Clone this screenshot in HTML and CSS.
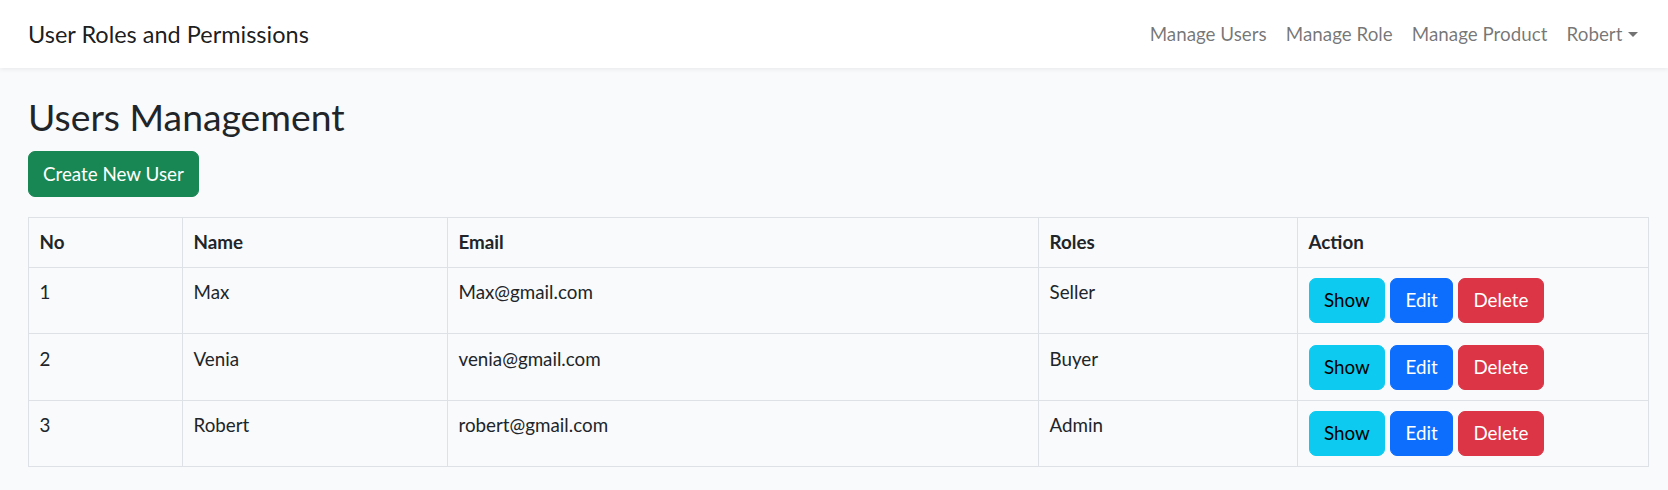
FILE: index.html
```html
<!DOCTYPE html>
<html lang="en">
<head>
<meta charset="utf-8">
<title>User Roles and Permissions</title>
<link rel="stylesheet" href="styles.css">
</head>
<body>
<nav class="navbar">
  <a class="brand" href="#">User Roles and Permissions</a>
  <ul class="nav">
    <li><a class="nav-link" href="#">Manage Users</a></li>
    <li><a class="nav-link" href="#">Manage Role</a></li>
    <li><a class="nav-link" href="#">Manage Product</a></li>
    <li><a class="nav-link dropdown-toggle" href="#">Robert</a></li>
  </ul>
</nav>
<main class="main">
  <h2 class="title">Users Management</h2>
  <a class="btn btn-success" href="#">Create New User</a>
  <table class="table">
    <colgroup>
      <col class="c-no"><col class="c-name"><col class="c-email"><col class="c-roles"><col class="c-action">
    </colgroup>
    <thead>
      <tr><th>No</th><th>Name</th><th>Email</th><th>Roles</th><th>Action</th></tr>
    </thead>
    <tbody>
      <tr>
        <td>1</td><td>Max</td><td>Max@gmail.com</td><td>Seller</td>
        <td><div class="actions"><a class="btn btn-info" href="#">Show</a><a class="btn btn-primary" href="#">Edit</a><a class="btn btn-danger" href="#">Delete</a></div></td>
      </tr>
      <tr>
        <td>2</td><td>Venia</td><td>venia@gmail.com</td><td>Buyer</td>
        <td><div class="actions"><a class="btn btn-info" href="#">Show</a><a class="btn btn-primary" href="#">Edit</a><a class="btn btn-danger" href="#">Delete</a></div></td>
      </tr>
      <tr>
        <td>3</td><td>Robert</td><td>robert@gmail.com</td><td>Admin</td>
        <td><div class="actions"><a class="btn btn-info" href="#">Show</a><a class="btn btn-primary" href="#">Edit</a><a class="btn btn-danger" href="#">Delete</a></div></td>
      </tr>
    </tbody>
  </table>
</main>
</body>
</html>
```

FILE: styles.css
```css
* { box-sizing: border-box; }
html, body { margin: 0; }
body {
  background: #f8fafc;
  color: #212529;
  font-family: "Lato", "Noto Sans", sans-serif;
  font-size: 18.8px;
  line-height: 28.8px;
}
a { text-decoration: none; }

.navbar {
  height: 68px;
  background: #fff;
  box-shadow: 0 2.4px 4.8px rgba(0,0,0,.075);
  display: flex;
  align-items: center;
  justify-content: space-between;
  padding: 0 20px 0 28px;
}
.brand {
  font-size: 23.5px;
  line-height: 36px;
  color: rgba(0,0,0,.9);
}
.nav {
  list-style: none;
  margin: 0;
  padding: 0;
  display: flex;
  align-items: center;
}
.nav-link {
  display: block;
  padding: 10px 9.6px;
  line-height: 28.8px;
  color: rgba(0,0,0,.55);
}
.dropdown-toggle::after {
  content: "";
  display: inline-block;
  margin-left: 6px;
  vertical-align: 4px;
  border-top: 5px solid rgba(0,0,0,.55);
  border-left: 5px solid transparent;
  border-right: 5px solid transparent;
}

.main {
  padding: 26px 20px 0 28px;
}
.title {
  margin: 0 0 11px;
  font-size: 37.3px;
  line-height: 46px;
  font-weight: 400;
}

.btn {
  display: inline-block;
  padding: 7.2px 14.4px;
  font-size: 18.8px;
  line-height: 28.8px;
  border: 1px solid transparent;
  border-radius: 7px;
  color: #fff;
  vertical-align: middle;
}
.btn-success { background: #198754; border-color: #198754; padding: 7.6px 14px; }
.btn-info { background: #0dcaf0; border-color: #0dcaf0; color: #000; }
.btn-primary { background: #0d6efd; border-color: #0d6efd; }
.btn-danger { background: #dc3545; border-color: #dc3545; }

.table {
  margin-top: 20px;
  width: 100%;
  border-collapse: collapse;
  table-layout: fixed;
}
.c-no { width: 154px; }
.c-name { width: 265px; }
.c-email { width: 591px; }
.c-roles { width: 259px; }
.c-action { width: 351px; }
.table th, .table td {
  border: 1px solid #dee2e6;
  padding: 10px 10.5px;
  text-align: left;
  vertical-align: top;
}
.table td { padding-top: 10.2px; padding-bottom: 10.2px; }
.table th { font-weight: 700; }
.actions {
  display: flex;
  gap: 5px;
}
```
